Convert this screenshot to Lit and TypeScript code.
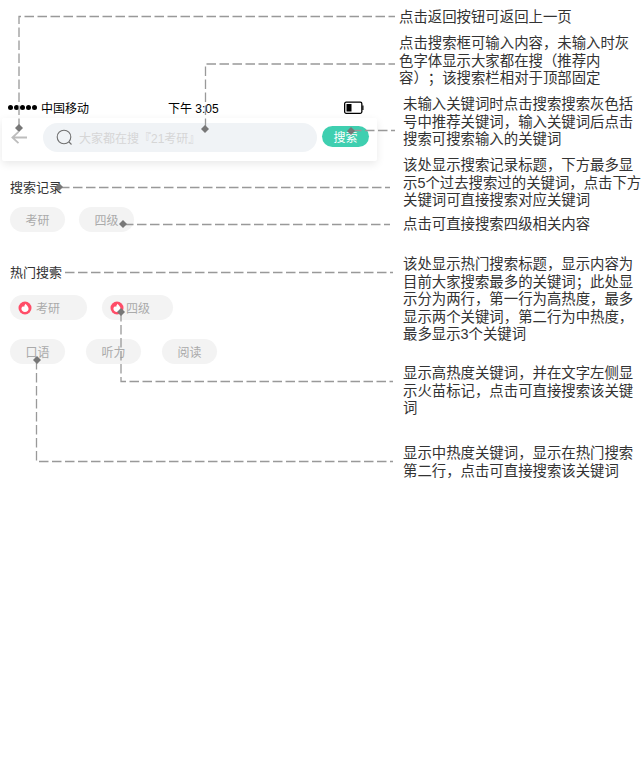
import { LitElement, html, css, svg } from "lit";
import { customElement } from "lit/decorators.js";

const NOTES = [
  { cls: "n1", lines: ["点击返回按钮可返回上一页"] },
  { cls: "n2", lines: ["点击搜索框可输入内容，未输入时灰", "色字体显示大家都在搜（推荐内", "容）；该搜索栏相对于顶部固定"] },
  { cls: "n3", lines: ["未输入关键词时点击搜索搜索灰色括", "号中推荐关键词，输入关键词后点击", "搜索可搜索输入的关键词"] },
  { cls: "n4", lines: ["该处显示搜索记录标题，下方最多显", "示5个过去搜索过的关键词，点击下方", "关键词可直接搜索对应关键词"] },
  { cls: "n5", lines: ["点击可直接搜索四级相关内容"] },
  { cls: "n6", lines: ["该处显示热门搜索标题，显示内容为", "目前大家搜索最多的关键词；此处显", "示分为两行，第一行为高热度，最多", "显示两个关键词，第二行为中热度，", "最多显示3个关键词"] },
  { cls: "n7", lines: ["显示高热度关键词，并在文字左侧显", "示火苗标记，点击可直接搜索该关键", "词"] },
  { cls: "n8", lines: ["显示中热度关键词，显示在热门搜索", "第二行，点击可直接搜索该关键词"] },
];

const LINES = [
  "M19 128V16.5H395",
  "M205.5 128V64H395",
  "M352 130.5H395",
  "M60 187.5H390",
  "M124 224.5H390",
  "M65 272.5H393",
  "M121 312V381.5H393",
  "M36.5 360V461.5H393",
];

const DOTS: [number, number][] = [
  [19, 128], [205, 129], [351, 131], [59, 187], [123, 224], [54, 272], [121, 312], [37, 360],
];

const flame = html`<svg class="flame" width="14" height="14" viewBox="0 0 14 14">
  <circle cx="7" cy="7" r="6.5" fill="#ff4d68"></circle>
  <path d="M7.8 2.8C8 4 10.6 5.4 10.6 7.8 10.6 9.8 9 11 7 11S3.4 9.8 3.4 7.8C3.4 6.2 4.6 5.4 5.4 5.2 5.5 5.7 5.8 6 6.2 6 6.2 4.8 6.8 3.5 7.8 2.8Z" fill="#fff"></path>
</svg>`;

@customElement("app-root")
export class AppRoot extends LitElement {
  static styles = css`
    :host {
      display: block;
      position: relative;
      width: 643px;
      height: 776px;
      overflow: hidden;
      background: #fff;
      font-family: "Liberation Sans", "Noto Sans CJK SC", sans-serif;
      text-spacing-trim: space-all;
    }
    .phone {
      width: 378px;
      padding-top: 99px;
      display: flex;
      flex-direction: column;
    }
    .status {
      height: 17px;
      display: flex;
      align-items: center;
      padding-left: 8px;
      font-size: 12px;
      color: #000;
      position: relative;
    }
    .dots { display: flex; gap: 1px; margin-right: 4px; }
    .dots i { width: 5px; height: 5px; border-radius: 50%; background: #000; display: block; }
    .time { margin-left: 79px; width: 176px; }
    .card {
      margin: 2px 1px 0 2px;
      height: 43px;
      box-sizing: border-box;
      padding: 5px 8px 0 9px;
      background: #fff;
      border-radius: 2px;
      box-shadow: 0 3px 8px rgba(0, 0, 0, 0.09);
      display: flex;
      align-items: flex-start;
    }
    .back { margin: 8px 16px 0 0; flex: none; }
    .search {
      flex: none;
      box-sizing: border-box;
      width: 274px;
      height: 29px;
      border-radius: 15px;
      background: #f0f3f6;
      display: flex;
      align-items: center;
      padding-left: 13px;
      gap: 6px;
      font-size: 12px;
      color: #d6d6d6;
    }
    .go {
      flex: none;
      margin: 3px 0 0 5px;
      width: 47px;
      height: 21px;
      border-radius: 11px;
      background: #3fcfb0;
      color: #fff;
      font-size: 12px;
      display: flex;
      align-items: center;
      justify-content: center;
    }
    .body { padding: 18px 0 0 10px; display: flex; flex-direction: column; }
    .title { font-size: 13px; line-height: 18px; color: #333; }
    .row { display: flex; }
    .chip {
      height: 25px;
      box-sizing: border-box;
      border-radius: 13px;
      background: #f3f3f3;
      color: #aaa;
      font-size: 12px;
      display: flex;
      align-items: center;
      justify-content: center;
    }
    .w55 { width: 55px; }
    .row-a { gap: 14px; margin-top: 10px; }
    .row-b { margin-top: 13px; }
    .row-c { gap: 21px; margin-top: 19px; }
    .hot1, .hot2 { justify-content: flex-start; padding-left: 8px; }
    .hot1 { width: 77px; gap: 4px; margin-right: 15px; }
    .hot2 { width: 71px; gap: 2px; }
    .flame { flex: none; }
    .title-hot { margin-top: 32px; }
    .lines { position: absolute; left: 0; top: 0; pointer-events: none; }
    .note {
      position: absolute;
      left: 403px;
      margin: 0;
      font-size: 14.4px;
      line-height: 17.5px;
      color: #333;
      white-space: nowrap;
    }
    .n1 { left: 399px; top: 9px; }
    .n2 { left: 399px; top: 35px; }
    .n3 { top: 96px; }
    .n4 { top: 157px; }
    .n5 { top: 216px; }
    .n6 { top: 256px; }
    .n7 { top: 365px; }
    .n8 { top: 445px; }
  `;

  render() {
    return html`
      <div class="phone">
        <div class="status">
          <div class="dots"><i></i><i></i><i></i><i></i><i></i></div>
          <span>中国移动</span>
          <span class="time">下午 3:05</span>
          <svg width="20" height="13" viewBox="0 0 20 13">
            <rect x="0.65" y="1.15" width="17.2" height="11.2" rx="1.5" fill="#fff" stroke="#000" stroke-width="1.3"></rect>
            <rect x="2.5" y="3" width="5" height="7.5" fill="#000"></rect>
            <path d="M18.9 4.5v4.5" stroke="#000" stroke-width="1.2"></path>
          </svg>
        </div>
        <div class="card">
          <svg class="back" width="16" height="13" viewBox="0 0 16 13" fill="none" stroke="#bdbdbd" stroke-width="1.8">
            <path d="M7.5 .8 1.4 6.5l6.1 5.7M1.4 6.5H16"></path>
          </svg>
          <div class="search">
            <svg width="17" height="17" viewBox="0 0 17 17" fill="none" stroke="#707070" stroke-width="1.1">
              <circle cx="8" cy="8" r="6.8"></circle>
              <path d="M13 13l2.5 2.5"></path>
            </svg>
            <span>大家都在搜『21考研』</span>
          </div>
          <div class="go">搜索</div>
        </div>
        <div class="body">
          <div class="title">搜索记录</div>
          <div class="row row-a">
            <div class="chip w55">考研</div>
            <div class="chip w55">四级</div>
          </div>
          <div class="title title-hot">热门搜索</div>
          <div class="row row-b">
            <div class="chip hot1">${flame}<span>考研</span></div>
            <div class="chip hot2">${flame}<span>四级</span></div>
          </div>
          <div class="row row-c">
            <div class="chip w55">口语</div>
            <div class="chip w55">听力</div>
            <div class="chip w55">阅读</div>
          </div>
        </div>
      </div>
      <svg class="lines" width="643" height="776" viewBox="0 0 643 776" fill="none">
        ${LINES.map((d) => svg`<path d=${d} stroke="#999" stroke-width="1.3" stroke-dasharray="9.5 3.5"></path>`)}
        ${DOTS.map(([x, y]) => svg`<path d=${`M${x} ${y - 4}L${x + 4} ${y}L${x} ${y + 4}L${x - 4} ${y}Z`} fill="#777"></path>`)}
      </svg>
      ${NOTES.map(
        (n) => html`<p class="note ${n.cls}">${n.lines.map((l, i) => (i ? html`<br />${l}` : l))}</p>`
      )}
    `;
  }
}
